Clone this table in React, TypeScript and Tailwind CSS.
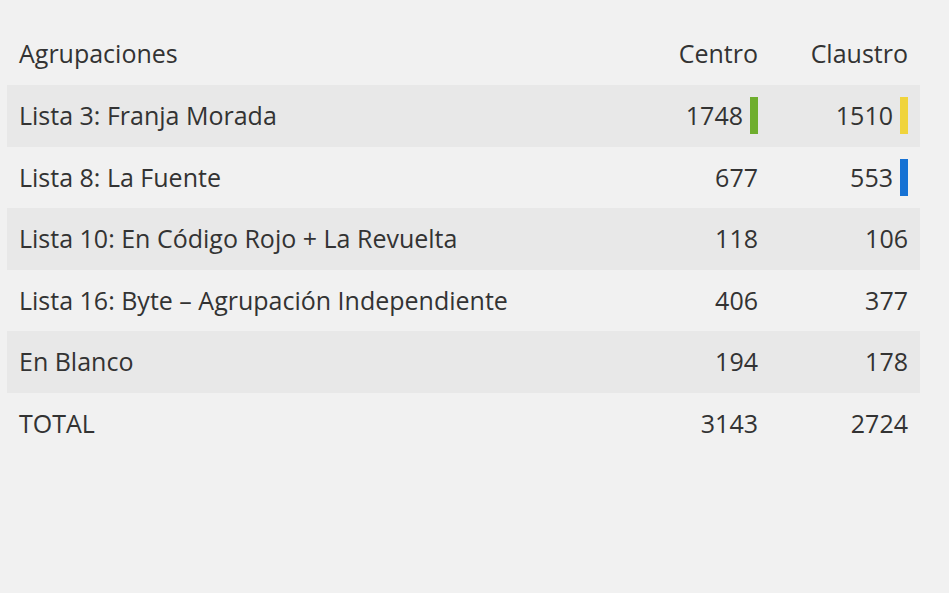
const rows = [
  { name: "Lista 3: Franja Morada", centro: 1748, claustro: 1510, centroBar: "bg-[#6fae2e]", claustroBar: "bg-[#f0d43c]" },
  { name: "Lista 8: La Fuente", centro: 677, claustro: 553, claustroBar: "bg-[#1672d4]" },
  { name: "Lista 10: En Código Rojo + La Revuelta", centro: 118, claustro: 106 },
  { name: "Lista 16: Byte – Agrupación Independiente", centro: 406, claustro: 377 },
  { name: "En Blanco", centro: 194, claustro: 178 },
];

function Cell({ value, bar }: { value: number | string; bar?: string }) {
  return (
    <div className="flex items-center justify-end pr-3">
      <span>{value}</span>
      {bar && <span className={`ml-[7px] h-[37px] w-2 ${bar}`} />}
    </div>
  );
}

export default function App() {
  return (
    <div className="min-h-[593px] w-full bg-[#f1f1f1] pt-[22px] pl-[7px] font-['Open_Sans',sans-serif] text-[25px] text-[#333333]">
      <div className="w-[913px]">
        <div className="grid h-[63px] grid-cols-[1fr_120px_150px] items-center">
          <div className="pl-3">Agrupaciones</div>
          <Cell value="Centro" />
          <Cell value="Claustro" />
        </div>
        {rows.map((r, i) => (
          <div
            key={r.name}
            className={`grid h-[61.5px] grid-cols-[1fr_120px_150px] items-center ${i % 2 === 0 ? "bg-[#e8e8e8]" : ""}`}
          >
            <div className="pl-3">{r.name}</div>
            <Cell value={r.centro} bar={r.centroBar} />
            <Cell value={r.claustro} bar={r.claustroBar} />
          </div>
        ))}
        <div className="grid h-[61.5px] grid-cols-[1fr_120px_150px] items-center">
          <div className="pl-3">TOTAL</div>
          <Cell value={3143} />
          <Cell value={2724} />
        </div>
      </div>
    </div>
  );
}
